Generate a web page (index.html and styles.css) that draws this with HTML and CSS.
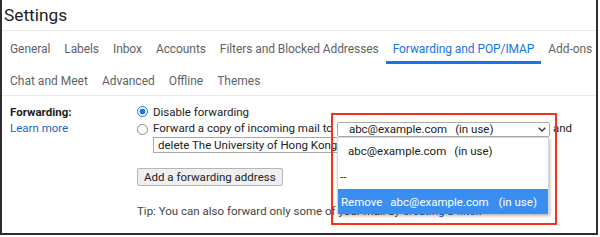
FILE: index.html
```html
<!DOCTYPE html>
<html>
<head>
<meta charset="utf-8">
<link rel="stylesheet" href="styles.css">
</head>
<body>
<div class="frame">
  <div class="title">Settings</div>
  <div class="tabs">
    <div class="tabrow row1">
      <span class="tab">General</span>
      <span class="tab">Labels</span>
      <span class="tab">Inbox</span>
      <span class="tab">Accounts</span>
      <span class="tab">Filters and Blocked Addresses</span>
      <span class="tab active">Forwarding and POP/IMAP</span>
      <span class="tab">Add-ons</span>
    </div>
    <div class="tabrow row2">
      <span class="tab">Chat and Meet</span>
      <span class="tab">Advanced</span>
      <span class="tab">Offline</span>
      <span class="tab">Themes</span>
    </div>
  </div>
  <div class="content">
    <div class="labelcol">
      <div class="lbl">Forwarding:</div>
      <a class="link">Learn more</a>
    </div>
    <div class="opts">
      <div class="opt opt1"><span class="radio on"></span>Disable forwarding</div>
      <div class="opt opt2"><span class="radio"></span>Forward a copy of incoming mail to <span class="select"><span class="addr">abc@example.com</span><span class="use">(in use)</span><svg class="chev" width="8" height="5" viewBox="0 0 8 5"><path d="M0.7 0.7 L4 4 L7.3 0.7" fill="none" stroke="#333" stroke-width="1.3"/></svg></span> and</div>
      <div class="line3"><span class="select2">delete The University of Hong Kong Mail's copy</span></div>
      <div class="btnrow"><span class="btn">Add a forwarding address</span></div>
      <div class="tip">Tip: You can also forward only some of your mail by <a class="link">creating a filter</a>.</div>
    </div>
  </div>
  <div class="dropdown">
    <div class="item first"><span class="addr">abc@example.com</span><span class="use">(in use)</span></div>
    <div class="item sep">--</div>
    <div class="item sel"><span class="rm">Remove</span><span class="addr">abc@example.com</span><span class="use2">(in use)</span></div>
  </div>
  <div class="redbox"></div>
</div>
</body>
</html>
```
FILE: styles.css
```css
html, body {
  margin: 0;
  padding: 0;
  background: #fff;
}
body {
  width: 600px;
  height: 237px;
  overflow: hidden;
  font-family: Roboto, "Liberation Sans", Arial, sans-serif;
}
.frame {
  position: relative;
  width: 598px;
  height: 235px;
  box-sizing: border-box;
  border: 2px solid #2e2e2e;
  border-top: 0;
  overflow: hidden;
}
.title {
  height: 31px;
  box-sizing: border-box;
  padding: 3px 0 0 2px;
  font-size: 17.3px;
  line-height: 24px;
  color: #202124;
  border-bottom: 1px solid #ebebeb;
}
.tabs {
  padding-left: 1px;
  border-bottom: 1px solid #ebebeb;
}
.tabrow {
  display: flex;
}
.row1 { height: 33px; }
.row2 { height: 31px; }
.tab {
  padding: 9px 7px 0;
  font-size: 12px;
  line-height: 16px;
  color: #5f6368;
  white-space: nowrap;
  box-sizing: border-box;
}
.row1 .tab { padding-top: 9.5px; letter-spacing: -0.08px; }
.tab.active {
  color: #1a73e8;
  box-shadow: inset 0 -3px 0 #1a73e8;
}
.content {
  display: flex;
  padding: 8px 0 0 8px;
  font-size: 11.5px;
  line-height: 16px;
  color: #222;
}
.labelcol {
  width: 127px;
  flex: none;
}
.lbl {
  font-weight: bold;
}
.link {
  display: block;
  color: #1a5fd0;
  text-decoration: none;
}
.tip .link {
  display: inline;
}
.opts {
  flex: 1;
}
.opt {
  display: flex;
  align-items: flex-start;
  white-space: nowrap;
}
.opt1 { height: 16px; }
.opt2 { height: 17px; line-height: 17px; }
.radio {
  width: 11px;
  height: 11px;
  box-sizing: border-box;
  border: 1px solid #8a8a8a;
  border-radius: 50%;
  margin: 2px 5px 0 0;
  background: #fff;
  flex: none;
}
.opt2 .radio { margin-top: 4px; }
.radio.on {
  border: 1.5px solid #1a73e8;
  background: radial-gradient(circle, #1a73e8 0 2.7px, #fff 3.1px);
}
.select {
  display: inline-flex;
  align-items: center;
  width: 213px;
  height: 15px;
  box-sizing: border-box;
  border: 1px solid #a9a9a9;
  border-radius: 2px;
  margin: 2px 3px 0 4px;
  padding-left: 11px;
  line-height: 13px;
  background: #fff;
}
.select .addr { margin-right: 8px; }
.select .chev { margin-left: auto; margin-right: 3px; }
.line3 {
  height: 16px;
  padding-left: 16px;
}
.select2 {
  display: inline-block;
  width: 300px;
  height: 16px;
  box-sizing: border-box;
  border: 1px solid #a9a9a9;
  padding-left: 4px;
  line-height: 14px;
  white-space: nowrap;
  overflow: hidden;
  vertical-align: top;
}
.btnrow {
  margin-top: 15px;
  height: 18px;
}
.btn {
  display: inline-block;
  height: 18px;
  box-sizing: border-box;
  padding: 0 6px;
  border: 1px solid #b5b5b5;
  border-radius: 2px;
  background: #efefef;
  line-height: 16px;
  color: #222;
  white-space: nowrap;
}
.tip {
  margin-top: 17px;
  color: #444;
  white-space: nowrap;
}
.dropdown {
  position: absolute;
  left: 335px;
  top: 137px;
  width: 212px;
  height: 77px;
  background: #fff;
  border: 1px solid #d6d6d6;
  box-sizing: border-box;
  box-shadow: 1px 2px 3px rgba(0,0,0,0.28);
  font-size: 11.5px;
  color: #222;
}
.item {
  height: 25px;
  display: flex;
  align-items: center;
  white-space: nowrap;
}
.item.first { height: 26px; padding-left: 10px; }
.item.first .addr { margin-right: 8px; }
.item.sep { padding-left: 2px; }
.item.sel {
  background: #3a8ef0;
  color: #fff;
  padding-left: 3px;
}
.item.sel .rm { margin-right: 8px; }
.item.sel .addr { margin-right: 10px; }
.redbox {
  position: absolute;
  left: 329px;
  top: 113px;
  width: 226px;
  height: 112px;
  box-sizing: border-box;
  border: 2px solid #f5321e;
}
```
